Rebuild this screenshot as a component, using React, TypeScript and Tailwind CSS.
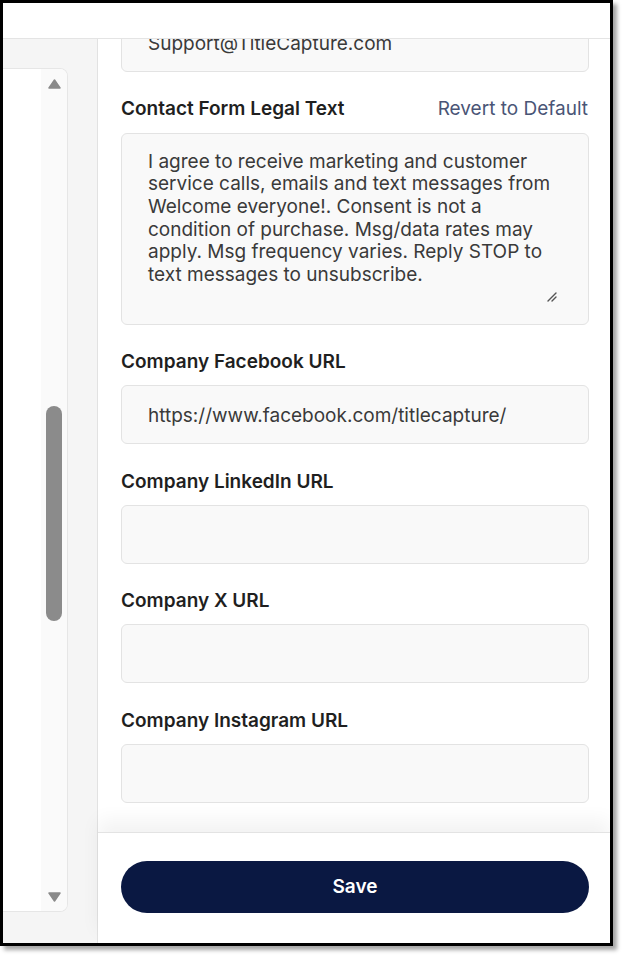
import React from 'react';

const font = { fontFamily: 'Inter, "Noto Sans", sans-serif' };

const legalLines = [
  'I agree to receive marketing and customer',
  'service calls, emails and text messages from',
  'Welcome everyone!. Consent is not a',
  'condition of purchase. Msg/data rates may',
  'apply. Msg frequency varies. Reply STOP to',
  'text messages to unsubscribe.',
];

const Field = ({ label, value }: { label: string; value?: string }) => (
  <div>
    <div className="h-[24px] leading-[24px] pt-[1px] mb-[12px] text-[19px] font-semibold text-[#1f1f1f]">
      {label}
    </div>
    <div className="h-[59px] rounded-md border border-[#e3e3e3] bg-[#f9f9f9] px-[26px] pt-[3px] flex items-center text-[19px] text-[#3a3a3a]">
      {value}
    </div>
  </div>
);

const Arrow = ({ down }: { down?: boolean }) => (
  <svg width="13" height="10" viewBox="0 0 13 10" className={down ? 'rotate-180' : ''}>
    <path d="M6.5 1 L12 9 L1 9 Z" fill="#8a8a8a" stroke="#8a8a8a" strokeWidth="1.5" strokeLinejoin="round" />
  </svg>
);

export default function App() {
  return (
    <div className="w-[624px] h-[961px] bg-white" style={font}>
      <div className="w-[613px] h-[946px] border-[3px] border-black shadow-[4px_4px_4px_rgba(0,0,0,0.35)] bg-white flex flex-col overflow-hidden">
        {/* header */}
        <div className="h-[36px] shrink-0 border-b border-[#e4e4e4] bg-white" />

        <div className="flex flex-1 min-h-0">
          {/* left panel */}
          <aside className="w-[95px] shrink-0 bg-[#f5f5f5] border-r border-[#e2e2e2] pt-[29px] pb-[31px] flex">
            <div className="w-[65px] bg-white border border-l-0 border-[#e6e6e6] rounded-r-lg flex justify-end overflow-hidden">
              <div className="w-[26px] bg-[#fafafa] flex flex-col items-center pt-[10px] pb-[9px]">
                <Arrow />
                <div className="mt-[317px] w-[16px] h-[215px] rounded-full bg-[#8b8b8b]" />
                <div className="flex-1" />
                <Arrow down />
              </div>
            </div>
          </aside>

          {/* main form */}
          <main className="flex-1 min-w-0 flex flex-col">
            <div className="flex-1 min-h-0 overflow-hidden pl-[23px] pr-[21px]">
              <div className="-mt-[26px] flex flex-col gap-[24.5px]">
                <div className="h-[59px] rounded-md border border-[#e3e3e3] bg-[#f9f9f9] px-[26px] pt-[3px] flex items-center text-[19px] text-[#3a3a3a]">
                  Support@TitleCapture.com
                </div>

                <div>
                  <div className="h-[24px] leading-[24px] pt-[1px] mb-[12px] flex justify-between items-center">
                    <span className="text-[19px] font-semibold text-[#1f1f1f]">Contact Form Legal Text</span>
                    <button className="text-[19px] text-[#4a5576] mr-[1px]">Revert to Default</button>
                  </div>
                  <div className="relative h-[192px] rounded-md border border-[#e3e3e3] bg-[#f9f9f9] pl-[26px] pt-[17px] text-[19px] leading-[22.7px] text-[#3a3a3a] whitespace-nowrap">
                    {legalLines.map((l) => (
                      <div key={l}>{l}</div>
                    ))}
                    <svg className="absolute right-[31px] bottom-[22px]" width="10" height="10" viewBox="0 0 10 10">
                      <path d="M1 9 L9 1 M5 9 L9 5" stroke="#555" strokeWidth="1.4" strokeLinecap="round" />
                    </svg>
                  </div>
                </div>

                <Field label="Company Facebook URL" value="https://www.facebook.com/titlecapture/" />
                <Field label="Company LinkedIn URL" />
                <Field label="Company X URL" />
                <Field label="Company Instagram URL" />
              </div>
            </div>

            <footer className="relative h-[111px] shrink-0 border-t border-[#e3e3e3] bg-white shadow-[0_-12px_18px_rgba(0,0,0,0.05)] pt-[28px] pl-[23px] pr-[21px]">
              <button className="w-full h-[52px] rounded-full bg-[#0a1842] text-white text-[19px] font-semibold">
                Save
              </button>
            </footer>
          </main>
        </div>
      </div>
    </div>
  );
}
